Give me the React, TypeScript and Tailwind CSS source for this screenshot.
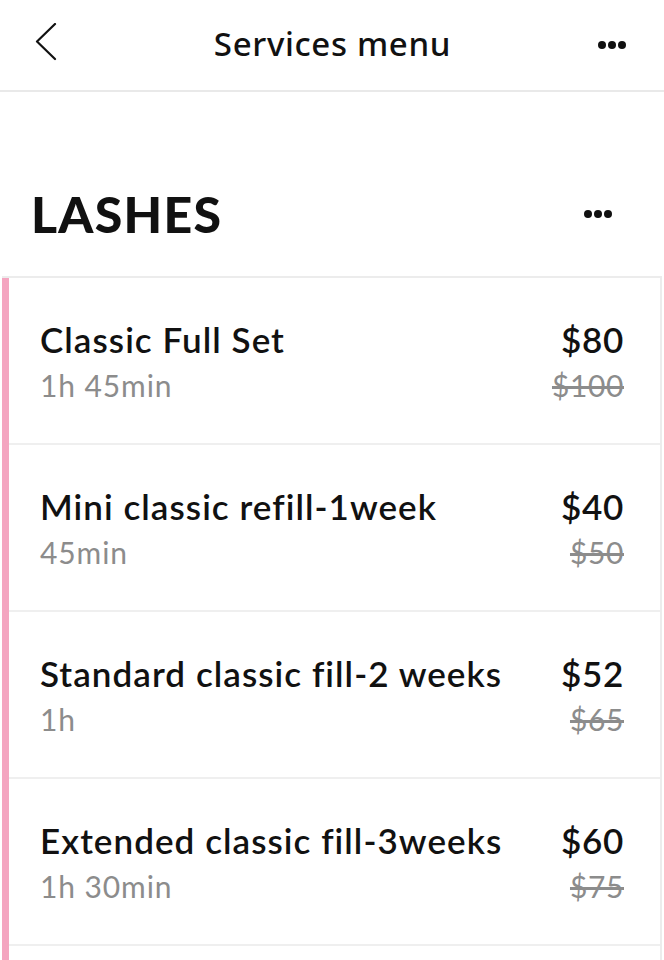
interface Service {
  name: string;
  duration: string;
  price: string;
  oldPrice: string;
}

const services: Service[] = [
  { name: 'Classic Full Set', duration: '1h 45min', price: '$80', oldPrice: '$100' },
  { name: 'Mini classic refill-1week', duration: '45min', price: '$40', oldPrice: '$50' },
  { name: 'Standard classic fill-2 weeks', duration: '1h', price: '$52', oldPrice: '$65' },
  { name: 'Extended classic fill-3weeks', duration: '1h 30min', price: '$60', oldPrice: '$75' },
];

function Dots() {
  return (
    <div className="flex items-center gap-[2px]">
      <span className="w-[8px] h-[8px] rounded-full bg-[#111]" />
      <span className="w-[8px] h-[8px] rounded-full bg-[#111]" />
      <span className="w-[8px] h-[8px] rounded-full bg-[#111]" />
    </div>
  );
}

export default function App() {
  return (
    <div className="w-[664px] h-[960px] overflow-hidden bg-white text-[#111] font-['Lato',sans-serif]">
      {/* Header */}
      <header className="h-[92px] flex items-center justify-between pl-[35px] pr-[38px] border-b-2 border-[#e9e9e9]">
        <svg width="22" height="38" viewBox="0 0 22 38" fill="none" className="mb-[6px]">
          <polyline points="20,1 2,18.5 20,36" stroke="#111" strokeWidth="2.2" strokeLinecap="round" strokeLinejoin="round" />
        </svg>
        <h1 className="text-[33px] tracking-[0.02em] font-medium font-['Noto_Sans',sans-serif] text-[#111] -mt-[2px] ml-[10px]">
          Services menu
        </h1>
        <Dots />
      </header>

      {/* Category */}
      <div className="h-[184px] flex items-center justify-between pl-[31px] pr-[52px] pt-[60px]">
        <h2 className="text-[50px] font-black tracking-[0.025em]">LASHES</h2>
        <Dots />
      </div>

      {/* Services list */}
      <div className="ml-[2px] mr-[2px] border-t-2 border-r-2 border-[#ececec]">
        {services.map((s) => (
          <div key={s.name} className="border-l-[7px] border-[#f4a5c0]">
            <div className="h-[167px] flex items-center justify-between pl-[31px] pr-[36px] border-b-2 border-[#efefef]">
              <div className="flex flex-col gap-[4px]">
                <span className="text-[35px] leading-[44px] tracking-[0.03em] font-semibold">{s.name}</span>
                <span className="text-[30px] leading-[40px] tracking-[0.03em] text-[#8c8c8c]">{s.duration}</span>
              </div>
              <div className="flex flex-col items-end gap-[4px]">
                <span className="text-[35px] leading-[44px] tracking-[0.02em] font-semibold">{s.price}</span>
                <span className="text-[30px] leading-[40px] tracking-[0.02em] text-[#8c8c8c] line-through">{s.oldPrice}</span>
              </div>
            </div>
          </div>
        ))}
        <div className="border-l-[7px] border-[#f4a5c0] h-[40px]" />
      </div>
    </div>
  );
}
